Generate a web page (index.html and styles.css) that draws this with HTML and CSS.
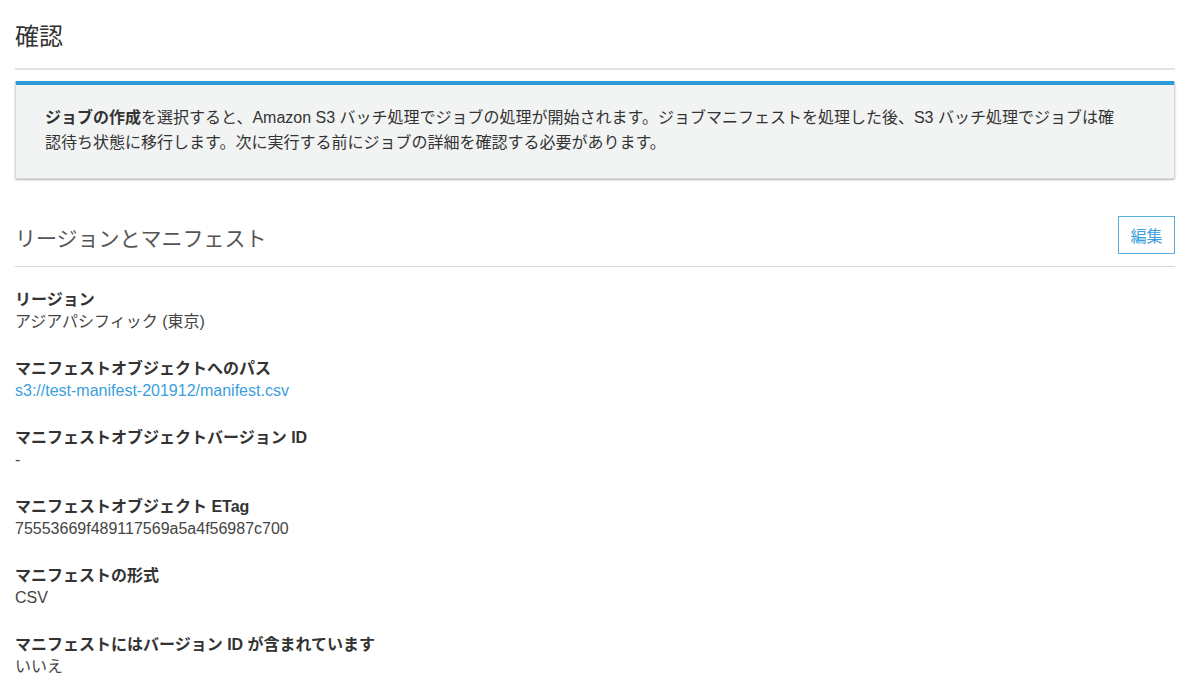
FILE: index.html
```html
<!DOCTYPE html>
<html lang="ja">
<head>
<meta charset="utf-8">
<title>確認</title>
<link rel="stylesheet" href="styles.css">
</head>
<body>
<div class="page">
  <h1 class="title">確認</h1>
  <div class="info">
    <p><strong>ジョブの作成</strong>を選択すると、Amazon S3 バッチ処理でジョブの処理が開始されます。ジョブマニフェストを処理した後、S3 バッチ処理でジョブは確認待ち状態に移行します。次に実行する前にジョブの詳細を確認する必要があります。</p>
  </div>
  <div class="section-head">
    <h2 class="section-title">リージョンとマニフェスト</h2>
    <button class="edit-btn">編集</button>
  </div>
  <dl class="details">
    <div class="item"><dt>リージョン</dt><dd>アジアパシフィック (東京)</dd></div>
    <div class="item"><dt>マニフェストオブジェクトへのパス</dt><dd><a class="link" href="#">s3://test-manifest-201912/manifest.csv</a></dd></div>
    <div class="item"><dt>マニフェストオブジェクトバージョン ID</dt><dd>-</dd></div>
    <div class="item"><dt>マニフェストオブジェクト ETag</dt><dd>75553669f489117569a5a4f56987c700</dd></div>
    <div class="item"><dt>マニフェストの形式</dt><dd>CSV</dd></div>
    <div class="item"><dt>マニフェストにはバージョン ID が含まれています</dt><dd>いいえ</dd></div>
  </dl>
</div>
</body>
</html>
```
FILE: styles.css
```css
html, body {
  margin: 0;
  padding: 0;
  background: #ffffff;
}
body {
  font-family: "Liberation Sans", Arial, "Noto Sans CJK JP", sans-serif;
  color: #333333;
  font-size: 16px;
}
.page {
  padding: 0 25px 0 15px;
}
.title {
  margin: 0;
  padding: 22px 0 16px;
  font-size: 24px;
  line-height: 30px;
  font-weight: normal;
  color: #333333;
  border-bottom: 2px solid #e3e3e3;
}
.info {
  margin-top: 11px;
  background: #f2f3f3;
  border: 1px solid #d5d9d9;
  border-top: 4px solid #2b9bd8;
  border-radius: 2px;
  box-shadow: 0 1px 2px rgba(0, 0, 0, 0.3);
  padding: 20px 49px 23px 29px;
}
.info p {
  margin: 0;
  line-height: 25px;
  color: #333333;
}
.info strong {
  font-weight: bold;
}
.section-head {
  margin-top: 37px;
  display: flex;
  align-items: center;
  justify-content: space-between;
  padding-bottom: 12px;
  border-bottom: 1px solid #d5d5d5;
}
.section-title {
  margin: 0;
  font-size: 21px;
  line-height: 30px;
  font-weight: normal;
  color: #555555;
  padding-top: 8px;
}
.edit-btn {
  width: 57px;
  height: 38px;
  background: #ffffff;
  border: 1px solid #5aaee3;
  color: #3a9fdc;
  font-family: inherit;
  font-size: 16px;
  padding: 0;
  cursor: pointer;
}
.details {
  margin: 0;
  padding-top: 22px;
}
.item {
  margin-bottom: 25px;
}
.item dt {
  font-weight: bold;
  line-height: 22px;
  color: #333333;
}
.item dd {
  margin: 0;
  line-height: 22px;
  color: #444444;
}
.link {
  color: #3a9fdc;
  text-decoration: none;
}
```
